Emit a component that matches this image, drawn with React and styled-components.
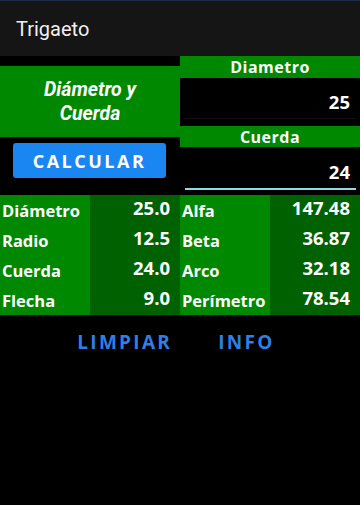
import React from 'react';
import styled, { createGlobalStyle } from 'styled-components';

const GlobalStyle = createGlobalStyle`
  *, *::before, *::after {
    box-sizing: border-box;
  }
  html, body {
    margin: 0;
    padding: 0;
    background: #000;
  }
  #root {
    min-height: 505px;
    background: #000;
  }
`;

const GREEN = '#008800';
const DARK_GREEN = '#006100';
const UI_FONT = '"Open Sans", "DejaVu Sans", sans-serif';

const Screen = styled.div`
  width: 360px;
  min-height: 505px;
  background: #000;
  font-family: ${UI_FONT};
`;

const TopBar = styled.header`
  height: 56px;
  border-top: 1px solid #1c2b47;
  background: #151515;
  display: flex;
  align-items: center;
  padding: 0 16px;
  color: #f0f0f0;
  font-family: Roboto, sans-serif;
  font-size: 20px;
`;

const InputSection = styled.section`
  display: grid;
  grid-template-columns: 180px 180px;
  height: 139px;
`;

const LeftColumn = styled.div`
  display: flex;
  flex-direction: column;
  padding-top: 10px;
`;

const TitleBox = styled.div`
  height: 71px;
  background: ${GREEN};
  display: flex;
  align-items: center;
  justify-content: center;
  text-align: center;
  color: #fff;
  font-family: Roboto, sans-serif;
  font-style: italic;
  font-weight: 700;
  font-size: 19.5px;
  line-height: 24px;
`;

const CalcButton = styled.button`
  margin: 6px 14px 0 13px;
  height: 35px;
  border: none;
  border-radius: 3px;
  background: #1a86f2;
  color: #fff;
  font-family: ${UI_FONT};
  font-weight: 700;
  font-size: 18px;
  letter-spacing: 2.5px;
  padding: 0;
`;

const RightColumn = styled.div`
  display: flex;
  flex-direction: column;
`;

const FieldLabel = styled.div`
  height: ${p => p.$h}px;
  background: ${GREEN};
  color: #fff;
  font-weight: 700;
  font-size: 16px;
  letter-spacing: 0.5px;
  display: flex;
  align-items: center;
  justify-content: center;
`;

const FieldBox = styled.div`
  height: ${p => p.$h}px;
  margin-left: 1px;
  background: #000;
  display: flex;
  align-items: flex-end;
  padding: 0 4px;
`;

const FieldInput = styled.div`
  flex: 1;
  text-align: right;
  color: #fff;
  font-weight: 700;
  font-size: 18.5px;
  line-height: 24px;
  padding: 0 6px 4px 0;
  margin-bottom: ${p => (p.$focused ? 5 : 7)}px;
  border-bottom: ${p => (p.$focused ? '2px solid #8fd8e6' : '1px solid #111')};
`;

const Results = styled.section`
  display: grid;
  grid-template-columns: repeat(4, 90px);
  height: 120px;
`;

const ResultCol = styled.div`
  background: ${p => (p.$dark ? DARK_GREEN : GREEN)};
  display: flex;
  flex-direction: column;
`;

const ResultCell = styled.div`
  height: 30px;
  display: flex;
  align-items: center;
  justify-content: ${p => (p.$value ? 'flex-end' : 'flex-start')};
  padding: ${p => (p.$value ? '0 10px 5px 0' : '1px 0 0 2px')};
  color: #fff;
  font-weight: 700;
  font-size: ${p => (p.$value ? 18.5 : 16.5)}px;
  white-space: nowrap;
`;

const Actions = styled.div`
  display: flex;
  justify-content: center;
  gap: 46px;
  padding: 10px 8px 0 0;
`;

const TextButton = styled.button`
  background: none;
  border: none;
  padding: 4px 0;
  color: #2e7fe6;
  font-family: ${UI_FONT};
  font-weight: 700;
  font-size: 19px;
  letter-spacing: 2.3px;
`;

const left = [
  ['Diámetro', '25.0'],
  ['Radio', '12.5'],
  ['Cuerda', '24.0'],
  ['Flecha', '9.0'],
];

const right = [
  ['Alfa', '147.48'],
  ['Beta', '36.87'],
  ['Arco', '32.18'],
  ['Perímetro', '78.54'],
];

const ResultPair = ({ rows }) => (
  <>
    <ResultCol>
      {rows.map(([label]) => <ResultCell key={label}>{label}</ResultCell>)}
    </ResultCol>
    <ResultCol $dark>
      {rows.map(([label, value]) => <ResultCell key={label} $value>{value}</ResultCell>)}
    </ResultCol>
  </>
);

const App = () => (
  <Screen>
    <GlobalStyle />
    <TopBar>Trigaeto</TopBar>

    <InputSection>
      <LeftColumn>
        <TitleBox>Diámetro y<br />Cuerda</TitleBox>
        <CalcButton>CALCULAR</CalcButton>
      </LeftColumn>

      <RightColumn>
        <FieldLabel $h={22}>Diametro</FieldLabel>
        <FieldBox $h={48}>
          <FieldInput>25</FieldInput>
        </FieldBox>
        <FieldLabel $h={21}>Cuerda</FieldLabel>
        <FieldBox $h={48}>
          <FieldInput $focused>24</FieldInput>
        </FieldBox>
      </RightColumn>
    </InputSection>

    <Results>
      <ResultPair rows={left} />
      <ResultPair rows={right} />
    </Results>

    <Actions>
      <TextButton>LIMPIAR</TextButton>
      <TextButton>INFO</TextButton>
    </Actions>
  </Screen>
);

export default App;
